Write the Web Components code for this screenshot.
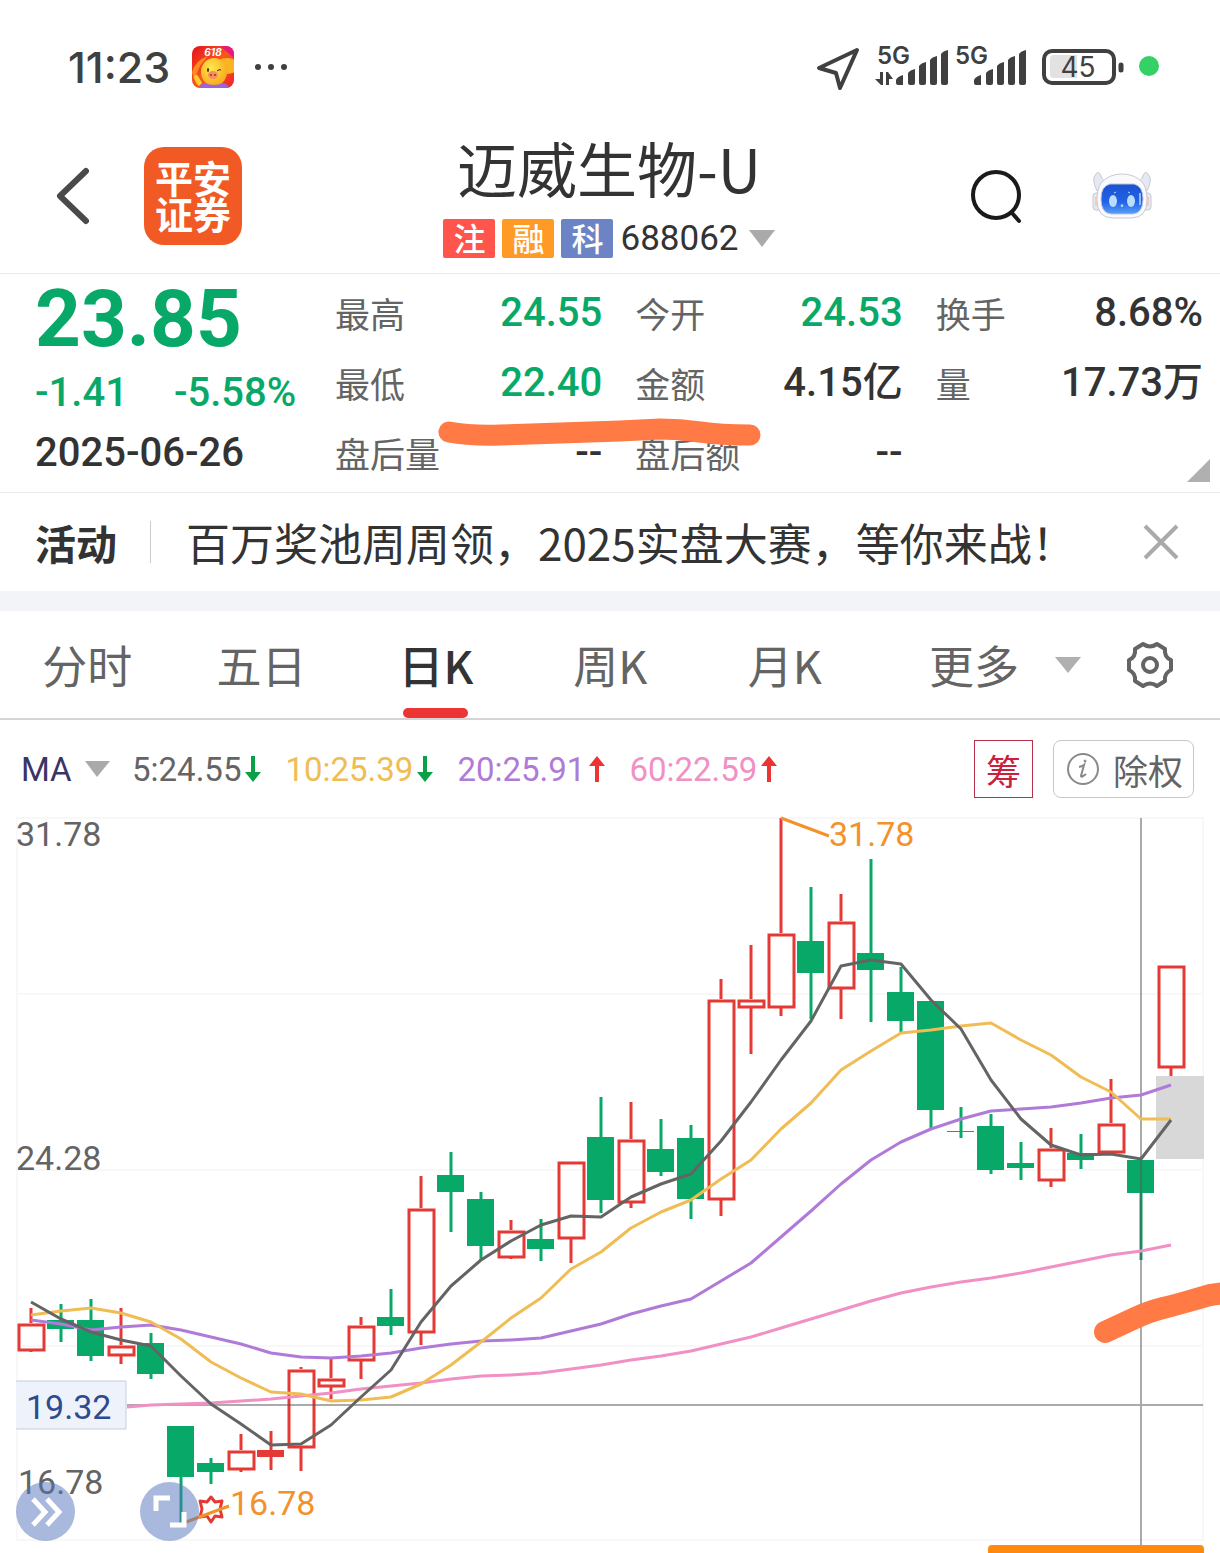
<!DOCTYPE html>
<html lang="zh-CN">
<head>
<meta charset="UTF-8">
<meta name="viewport" content="width=device-width, initial-scale=1">
<title>迈威生物-U 688062</title>
<style>
    body {
        margin: 0;
        background: #fff;
        color: #333;
        font-family: "Noto Sans CJK SC", "Noto Sans", sans-serif;
        --num: Roboto, "Noto Sans CJK SC", sans-serif;
        --up: #e53935;
        --down: #08a968;
        --muted: #646464;
        --line: #ebebeb;
        --brush: #ff7a45;
    }
</style>
</head>
<body>
<stock-page></stock-page>

<script>
class StatusBar extends HTMLElement {
    connectedCallback() {
        this.attachShadow({ mode: 'open' });
        this.shadowRoot.innerHTML = `
            <style>
                :host {
                    display: flex;
                    justify-content: space-between;
                    align-items: center;
                    height: 134px;
                    padding: 0 60px 0 68px;
                    box-sizing: border-box;
                    color: #404040;
                }
                .side {
                    display: flex;
                    align-items: center;
                }
                time {
                    font: 500 43px/1 Inter, sans-serif;
                    margin-right: 22px;
                }
                .dots {
                    margin-left: 20px;
                }
                svg {
                    display: block;
                    flex: none;
                }
                svg text {
                    font-family: Inter, sans-serif;
                    fill: #404040;
                }
            </style>
            <div class="side">
                <time>11:23</time>
                <svg width="42" height="42" viewBox="0 0 42 42">
                    <defs>
                        <linearGradient id="sky" x1="0" y1="0" x2="1" y2="1">
                            <stop offset="0" stop-color="#e60f1e"/>
                            <stop offset=".5" stop-color="#f9581c"/>
                            <stop offset="1" stop-color="#f0222c"/>
                        </linearGradient>
                        <radialGradient id="face" cx=".4" cy=".35" r=".7">
                            <stop offset="0" stop-color="#ffe84a"/>
                            <stop offset="1" stop-color="#f7a51b"/>
                        </radialGradient>
                        <clipPath id="tile"><rect width="42" height="42" rx="8"/></clipPath>
                    </defs>
                    <g clip-path="url(#tile)">
                        <rect width="42" height="42" fill="url(#sky)"/>
                        <path d="M28 0h14v12z" fill="#e6197c"/>
                        <path d="M0 26Q4 14 16 10L8 20 2 34z" fill="#ff8a1f"/>
                        <ellipse cx="35" cy="20" rx="12" ry="8" fill="#fbb325"/>
                        <ellipse cx="22" cy="26" rx="13" ry="14" fill="url(#face)"/>
                        <path d="M8 42q0-5 5-5 9 4 18 0 5 1 6 5z" fill="#9a63e0"/>
                        <path d="M2 31q2-4 4-1l4 7-3 3q-4-3-5-9z" fill="#ffd02e"/>
                        <ellipse cx="21" cy="29" rx="5" ry="4" fill="#f98a63"/>
                        <circle cx="19" cy="29" r="1" fill="#8d3a1c"/>
                        <circle cx="23" cy="29" r="1" fill="#8d3a1c"/>
                        <ellipse cx="16" cy="24" rx="1" ry="2" fill="#4a2a10"/>
                        <path d="M25 25q2-2 4-1" fill="none" stroke="#4a2a10"/>
                        <text x="21" y="10" text-anchor="middle" font-size="10" font-weight="700" font-style="italic" style="fill:#fff">618</text>
                    </g>
                </svg>
                <svg class="dots" width="34" height="8" viewBox="0 0 34 8" fill="#404040">
                    <circle cx="4" cy="4" r="3"/><circle cx="17" cy="4" r="3"/><circle cx="30" cy="4" r="3"/>
                </svg>
            </div>
            <div class="side">
                <svg width="344" height="50" viewBox="816 42 344 50">
                    <defs>
                        <path id="bars" d="M896 80q1-3 7-5v10h-5q-2 0-2-2zM908 73q2-3 7-4v14q0 2-2 2h-3q-2 0-2-2zM919 66q2-3 7-4v21q0 2-2 2h-3q-2 0-2-2zM930 60q2-3 7-4v27q0 2-2 2h-3q-2 0-2-2zM941 54q2-3 7-4v33q0 2-2 2h-3q-2 0-2-2z"/>
                    </defs>
                    <path d="M857 50L819 68l17 5 4 15z" fill="none" stroke="#404040" stroke-width="4" stroke-linejoin="round"/>
                    <text x="877" y="64" font-size="24" font-weight="600">5G</text>
                    <use href="#bars" fill="#404040"/>
                    <path d="M880 72h3v13h-2l-6-6h5zM886 85h3v-6h4l-5-7h-2z" fill="#404040"/>
                    <text x="955" y="64" font-size="24" font-weight="600">5G</text>
                    <use href="#bars" x="78" fill="#404040"/>
                    <rect x="1044" y="51" width="70" height="32" rx="8" fill="none" stroke="#404040" stroke-width="4"/>
                    <path d="M1054 55h23v23h-23q-4 0-4-4V59q0-4 4-4z" fill="#e2e2e2"/>
                    <path d="M1121 65v5" stroke="#404040" stroke-width="5" stroke-linecap="round"/>
                    <text x="1078" y="77" text-anchor="middle" font-size="28">45</text>
                    <circle cx="1149" cy="66" r="10" fill="#34d167"/>
                </svg>
            </div>
        `;
    }
}

class StockHeader extends HTMLElement {
    connectedCallback() {
        this.attachShadow({ mode: 'open' });
        this.shadowRoot.innerHTML = `
            <style>
                :host {
                    display: grid;
                    grid-template-columns: 1fr auto 1fr;
                    align-items: center;
                    padding: 0 68px 15px 54px;
                    border-bottom: 1px solid var(--line);
                }
                button {
                    display: flex;
                    align-items: center;
                    padding: 0;
                    border: 0;
                    background: none;
                    font: inherit;
                    color: inherit;
                }
                .left, .right {
                    display: flex;
                    align-items: center;
                }
                .left {
                    gap: 54px;
                }
                .right {
                    justify-content: flex-end;
                    gap: 69px;
                }
                .logo {
                    width: 98px;
                    height: 98px;
                    box-sizing: border-box;
                    padding-top: 4px;
                    border-radius: 20px;
                    background: #f15a24;
                    color: #fff;
                    font-family: "Liberation Sans", "Noto Sans CJK SC", sans-serif;
                    font-weight: 700;
                    font-size: 38px;
                    line-height: 36px;
                    display: grid;
                    place-content: center;
                    text-align: center;
                }
                .logo span {
                    display: block;
                }
                .title {
                    text-align: center;
                    padding-left: 12px;
                }
                h1 {
                    margin: 0 0 20px;
                    font-weight: 400;
                    font-size: 60px;
                    line-height: 65px;
                }
                .meta {
                    display: flex;
                    justify-content: center;
                    align-items: center;
                    gap: 7px;
                    height: 39px;
                }
                .code {
                    font-family: var(--num);
                    font-size: 35px;
                    line-height: 39px;
                    gap: 10px;
                }
                svg {
                    display: block;
                }
            </style>
            <div class="left">
                <button aria-label="返回">
                    <svg width="36" height="60" viewBox="0 0 36 60" fill="none" stroke="#4a4a4a" stroke-width="6" stroke-linecap="round" stroke-linejoin="round"><path d="M32 5L6 30l26 25"/></svg>
                </button>
                <div class="logo"><span>平安</span><span>证券</span></div>
            </div>
            <div class="title">
                <h1>迈威生物-U</h1>
                <div class="meta">
                    <stock-tag color="#ff554d">注</stock-tag>
                    <stock-tag color="#ff9a27">融</stock-tag>
                    <stock-tag color="#6c84c6">科</stock-tag>
                    <button class="code" aria-haspopup="true">688062
                        <svg width="26" height="17" viewBox="0 0 26 17" fill="#aaa"><path d="M0 0h26L13 17z"/></svg>
                    </button>
                </div>
            </div>
            <div class="right">
                <button aria-label="搜索">
                    <svg width="54" height="56" viewBox="0 0 54 56" fill="none" stroke="#1a1a1a" stroke-width="4" stroke-linecap="round"><circle cx="27" cy="27" r="23"/><path d="M43 45l7 8"/></svg>
                </button>
                <button aria-label="智能助手">
                    <svg width="60" height="50" viewBox="0 0 60 50">
                        <defs>
                            <linearGradient id="glass" x1="0" y1="0" x2="0" y2="1">
                                <stop offset="0" stop-color="#1b52cf"/>
                                <stop offset=".6" stop-color="#2262e8"/>
                                <stop offset="1" stop-color="#58a0f8"/>
                            </linearGradient>
                        </defs>
                        <g fill="#e6e9f1" stroke="#c6cad4">
                            <path d="M5 20Q-1 8 4 3q3-4 5 2 2 6 8 6zM55 20Q61 8 56 3q-3-4-5 2-2 6-8 6z"/>
                            <rect x="1" y="22" width="9" height="17" rx="3"/>
                            <rect x="50" y="22" width="9" height="17" rx="3"/>
                            <path d="M9 12Q17 3 30 3t21 9q4 6 4 17 0 18-16 18H21Q5 47 5 29 5 18 9 12z" fill="#fafafd"/>
                        </g>
                        <path d="M4 26v9M56 26v9" stroke="#f3c9c0" stroke-width="2"/>
                        <path d="M18 13h24q9 2 9 15 0 14-10 15H19Q9 42 9 28q0-13 9-15z" fill="url(#glass)" stroke="#b7c3df"/>
                        <ellipse cx="21" cy="30" rx="4" ry="6" fill="#b9dcff"/>
                        <ellipse cx="39" cy="30" rx="4" ry="6" fill="#b9dcff"/>
                        <path d="M22 22l2-1M38 22l-2-1M29 34h2l-1 2z" fill="#b9dcff" stroke="#b9dcff"/>
                        <path d="M48 22v12" stroke="#8fb9ff" stroke-width="2"/>
                    </svg>
                </button>
            </div>
        `;
    }
}

class StockTag extends HTMLElement {
    connectedCallback() {
        this.attachShadow({ mode: 'open' });
        this.shadowRoot.innerHTML = `
            <style>
                :host {
                    display: block;
                    width: 52px;
                    height: 39px;
                    border-radius: 2px;
                    background: ${this.getAttribute('color')};
                    color: #fff;
                    font-weight: 500;
                    font-size: 32px;
                    line-height: 37px;
                    text-align: center;
                }
            </style>
            <slot></slot>
        `;
    }
}

class QuotePanel extends HTMLElement {
    connectedCallback() {
        const stats = [
            ['最高', '24.55', 'down'], ['今开', '24.53', 'down'], ['换手', '8.68%', ''],
            ['最低', '22.40', 'down'], ['金额', '4.15亿', ''], ['量', '17.73万', ''],
            ['盘后量', '--', ''], ['盘后额', '--', '']
        ];
        this.attachShadow({ mode: 'open' });
        this.shadowRoot.innerHTML = `
            <style>
                :host {
                    display: grid;
                    grid-template-columns: 300px 1fr;
                    position: relative;
                    padding: 4px 17px 4px 35px;
                    border-bottom: 1px solid var(--line);
                    font-family: var(--num);
                    font-weight: 500;
                    font-size: 40px;
                }
                .down {
                    color: var(--down);
                }
                .price {
                    font-size: 80px;
                    font-weight: 700;
                    line-height: 82px;
                }
                .change {
                    display: flex;
                    gap: 46px;
                    line-height: 66px;
                }
                .date {
                    line-height: 54px;
                }
                dl {
                    display: grid;
                    grid-template-columns: repeat(3, 1fr);
                    column-gap: 33px;
                    margin: 0;
                }
                dl div {
                    display: flex;
                    justify-content: space-between;
                    line-height: 70px;
                }
                dt {
                    font-family: "Noto Sans CJK SC", sans-serif;
                    font-weight: 400;
                    font-size: 35px;
                    color: var(--muted);
                }
                dd {
                    margin: 0;
                }
                .more {
                    position: absolute;
                    right: 10px;
                    bottom: 10px;
                    width: 23px;
                    height: 23px;
                    padding: 0;
                    border: 0;
                    background: #b0b0b0;
                    clip-path: polygon(100% 0, 100% 100%, 0 100%);
                }
                .brush {
                    position: absolute;
                    left: 436px;
                    top: 142px;
                }
            </style>
            <div>
                <div class="price down">23.85</div>
                <div class="change down"><span>-1.41</span><span>-5.58%</span></div>
                <div class="date">2025-06-26</div>
            </div>
            <dl>
                ${stats.map(([k, v, c]) => `<div><dt>${k}</dt><dd class="${c}">${v}</dd></div>`).join('')}
            </dl>
            <button class="more" aria-label="展开"></button>
            <svg class="brush" width="330" height="34" viewBox="436 416 330 34" fill="none" stroke="var(--brush)" stroke-width="21" stroke-linecap="round" stroke-linejoin="round">
                <path d="M449 432Q470 436 500 435T560 433L620 431 660 429Q680 429 700 432T750 435"/>
            </svg>
        `;
    }
}

class PromoBar extends HTMLElement {
    connectedCallback() {
        this.attachShadow({ mode: 'open' });
        this.shadowRoot.innerHTML = `
            <style>
                :host {
                    display: flex;
                    align-items: center;
                    height: 98px;
                    padding: 0 40px 0 35px;
                    border-bottom: 20px solid #f3f4f8;
                    font-size: 44px;
                }
                strong {
                    font-size: 41px;
                    padding-right: 33px;
                }
                a {
                    flex: 1;
                    color: inherit;
                    text-decoration: none;
                    white-space: nowrap;
                }
                .rule {
                    width: 1px;
                    height: 42px;
                    margin-right: 35px;
                    background: #ccc;
                }
                button {
                    padding: 0;
                    border: 0;
                    background: none;
                }
                svg {
                    display: block;
                }
            </style>
            <strong>活动</strong>
            <span class="rule"></span>
            <a href="#"><slot></slot></a>
            <button aria-label="关闭">
                <svg width="38" height="36" viewBox="0 0 38 36" stroke="#aaa" stroke-width="4"><path d="M3 2l32 32M35 2L3 34"/></svg>
            </button>
        `;
    }
}

class PeriodTabs extends HTMLElement {
    connectedCallback() {
        const tabs = ['分时', '五日', '日K', '周K', '月K'];
        this.attachShadow({ mode: 'open' });
        this.shadowRoot.innerHTML = `
            <style>
                :host {
                    display: grid;
                    grid-template-columns: repeat(5, 1fr) 348px;
                    height: 107px;
                    border-bottom: 2px solid #d4d4d4;
                }
                button {
                    display: flex;
                    justify-content: center;
                    align-items: center;
                    position: relative;
                    padding: 0;
                    border: 0;
                    background: none;
                    font: inherit;
                    font-size: 45px;
                    color: var(--muted);
                }
                button[aria-selected="true"] {
                    color: #333;
                    font-weight: 500;
                }
                button[aria-selected="true"]::after {
                    content: "";
                    position: absolute;
                    bottom: 0;
                    width: 65px;
                    height: 10px;
                    border-radius: 5px;
                    background: #ec3434;
                }
                .tools {
                    display: flex;
                    justify-content: space-between;
                    padding: 0 46px 0 57px;
                }
                .more {
                    gap: 36px;
                }
            </style>
            ${tabs.map(t => `<button role="tab" aria-selected="${t === '日K'}">${t}</button>`).join('')}
            <div class="tools">
                <button class="more" aria-haspopup="true">更多
                    <svg width="26" height="16" viewBox="0 0 26 16" fill="#b0b0b0"><path d="M0 0h26L13 16z"/></svg>
                </button>
                <button aria-label="设置">
                    <svg width="48" height="48" viewBox="0 0 48 48" fill="none" stroke="#646464" stroke-width="4" stroke-linejoin="round">
                        <path d="M45 29Q38 32 39 40L31 45Q24 40 17 45L9 40Q10 32 3 29V19Q10 16 9 8L17 3Q24 8 31 3L39 8Q38 16 45 19Z"/>
                        <circle cx="24" cy="24" r="7"/>
                    </svg>
                </button>
            </div>
        `;
    }
}

class MaLegend extends HTMLElement {
    connectedCallback() {
        const items = [
            ['5:24.55', '#646464', false], ['10:25.39', '#f0bc54', false],
            ['20:25.91', '#b07ad8', true], ['60:22.59', '#f090c4', true]
        ];
        const arrow = up => up
            ? '<svg width="16" height="26" viewBox="0 0 16 26" fill="#ec3434"><path d="M6 26V10H0L8 0l8 10h-6v16z"/></svg>'
            : '<svg width="16" height="26" viewBox="0 0 16 26" fill="#0ba048"><path d="M6 0v16H0l8 10 8-10h-6V0z"/></svg>';
        this.attachShadow({ mode: 'open' });
        this.shadowRoot.innerHTML = `
            <style>
                :host {
                    display: flex;
                    align-items: center;
                    height: 80px;
                    padding: 18px 26px 0 21px;
                    box-sizing: border-box;
                    font-family: var(--num);
                    font-size: 33px;
                }
                label {
                    display: flex;
                    align-items: center;
                    gap: 12px;
                    margin-right: 22px;
                }
                select {
                    appearance: none;
                    width: 52px;
                    padding: 0;
                    border: 0;
                    background: none;
                    font: inherit;
                    color: #3a3564;
                }
                .item {
                    display: flex;
                    align-items: center;
                    gap: 4px;
                    margin-right: 24px;
                }
                button {
                    display: flex;
                    align-items: center;
                    justify-content: center;
                    height: 58px;
                    box-sizing: border-box;
                    border: 1px solid #c8c8c8;
                    border-radius: 8px;
                    background: #fff;
                    font-family: "Noto Sans CJK SC", sans-serif;
                    font-size: 35px;
                    line-height: 1;
                    color: var(--muted);
                }
                .chip {
                    width: 59px;
                    padding: 0;
                    margin: 0 20px 0 auto;
                    border: 1px solid #b8304a;
                    border-radius: 0;
                    color: #c9203c;
                }
                .adjust {
                    gap: 13px;
                    padding: 0 10px 0 12px;
                }
            </style>
            <label>
                <select aria-label="指标"><option>MA</option></select>
                <svg width="25" height="16" viewBox="0 0 25 16" fill="#aaa"><path d="M0 0h25L12 16z"/></svg>
            </label>
            ${items.map(([t, c, up]) => `<span class="item" style="color:${c}">${t}${arrow(up)}</span>`).join('')}
            <button class="chip">筹</button>
            <button class="adjust">
                <svg width="34" height="34" viewBox="0 0 34 34" fill="none" stroke="#8a8a8a">
                    <circle cx="17" cy="17" r="15" stroke-width="2"/>
                    <path d="M13 15q4-1 5-2l-3 11q0 2 5-2" stroke-width="2"/>
                    <circle cx="19" cy="9" r="1" fill="#8a8a8a"/>
                </svg>
                除权
            </button>
        `;
    }
}

// [high, bodyTop, bodyBottom, low, kind]: u = hollow red, f = filled red, d = green
const CANDLES = [
    [1308, 1323, 1352, 1352, 'u'], [1304, 1320, 1329, 1342, 'd'], [1299, 1320, 1356, 1361, 'd'],
    [1308, 1345, 1357, 1364, 'u'], [1333, 1343, 1374, 1379, 'd'], [1426, 1426, 1477, 1523, 'd'],
    [1458, 1463, 1472, 1484, 'd'], [1434, 1450, 1471, 1472, 'u'], [1431, 1450, 1457, 1470, 'f'],
    [1367, 1369, 1449, 1471, 'u'], [1359, 1378, 1388, 1399, 'u'], [1317, 1325, 1362, 1379, 'u'],
    [1289, 1317, 1326, 1335, 'd'], [1176, 1208, 1334, 1345, 'u'], [1152, 1175, 1192, 1232, 'd'],
    [1192, 1199, 1246, 1260, 'd'], [1220, 1230, 1259, 1259, 'u'], [1219, 1239, 1249, 1261, 'd'],
    [1161, 1161, 1240, 1263, 'u'], [1097, 1137, 1200, 1213, 'd'], [1102, 1139, 1204, 1208, 'u'],
    [1119, 1149, 1172, 1176, 'd'], [1125, 1138, 1199, 1219, 'd'], [979, 999, 1201, 1216, 'u'],
    [945, 999, 1009, 1054, 'u'], [818, 933, 1009, 1016, 'u'], [887, 941, 973, 1019, 'd'],
    [894, 921, 990, 1019, 'u'], [859, 953, 970, 1022, 'd'], [967, 992, 1021, 1034, 'd'],
    [1001, 1001, 1110, 1128, 'd'], [1107, 1131, 1132, 1138, 'd'], [1114, 1126, 1170, 1174, 'd'],
    [1142, 1163, 1168, 1180, 'd'], [1128, 1148, 1182, 1187, 'u'], [1134, 1153, 1160, 1169, 'd'],
    [1079, 1123, 1154, 1154, 'u'], [1160, 1160, 1193, 1260, 'd'], [965, 965, 1069, 1076, 'u']
];

const AVERAGES = [
    ['#f090c4', 4, [1405, 1404, 1403, 1401, 1399, 1396, 1393, 1389, 1386, 1383, 1379, 1376, 1375, 1373, 1369, 1365, 1360, 1356, 1351, 1344, 1337, 1328, 1319, 1310, 1301, 1293, 1287, 1282, 1278, 1273, 1267, 1261, 1255, 1251, 1245]],
    ['#b07ad8', 0, [1320, 1324, 1330, 1327, 1325, 1330, 1337, 1344, 1353, 1357, 1358, 1356, 1353, 1348, 1344, 1341, 1340, 1338, 1331, 1324, 1314, 1306, 1299, 1281, 1263, 1237, 1211, 1184, 1160, 1142, 1129, 1119, 1111, 1109, 1107, 1103, 1098, 1095, 1085]],
    ['#f0bc54', 0, [1315, 1311, 1308, 1313, 1322, 1339, 1362, 1378, 1392, 1394, 1401, 1400, 1397, 1384, 1365, 1342, 1318, 1298, 1269, 1252, 1228, 1212, 1200, 1179, 1160, 1129, 1103, 1070, 1051, 1033, 1030, 1026, 1023, 1040, 1055, 1077, 1092, 1119, 1119]],
    ['#646464', 0, [1302, 1319, 1332, 1340, 1346, 1376, 1404, 1424, 1445, 1444, 1425, 1397, 1370, 1322, 1286, 1260, 1241, 1225, 1216, 1217, 1197, 1184, 1174, 1141, 1102, 1060, 1021, 966, 960, 964, 1000, 1029, 1080, 1119, 1145, 1155, 1154, 1159, 1120]]
];

class CandleChart extends HTMLElement {
    x(i) {
        return 31 + i * 30;
    }

    candle([high, top, bottom, low, kind], i) {
        const x = this.x(i);
        const color = kind === 'd' ? 'var(--down)' : 'var(--up)';
        const wick = `<path d="M${x} ${high}V${top}M${x} ${bottom - 1}V${low}" stroke="${color}" stroke-width="3"/>`;
        if (kind === 'u') {
            return wick + `<rect x="${x - 12}" y="${top + 2}" width="25" height="${bottom - top - 4}" fill="none" stroke="${color}" stroke-width="3"/>`;
        }
        return wick + `<rect x="${x - 14}" y="${top}" width="27" height="${bottom - top}" fill="${color}"/>`;
    }

    average([color, start, values]) {
        const points = values.map((y, i) => `${this.x(i + start)},${y}`).join(' ');
        return `<polyline points="${points}" stroke="${color}"/>`;
    }

    connectedCallback() {
        this.attachShadow({ mode: 'open' });
        this.shadowRoot.innerHTML = `
            <style>
                :host {
                    display: block;
                    position: relative;
                }
                svg {
                    display: block;
                }
                .chart {
                    width: 100%;
                    height: auto;
                }
                text {
                    font-family: var(--num);
                    font-size: 34px;
                    fill: var(--muted);
                }
                .mark {
                    fill: #f3922b;
                }
                button {
                    position: absolute;
                    bottom: 12px;
                    width: 59px;
                    height: 59px;
                    padding: 0;
                    border: 0;
                    border-radius: 50%;
                    background: rgba(81, 115, 187, .5);
                }
                .next {
                    left: 16px;
                }
                .full {
                    left: 140px;
                }
            </style>
            <svg class="chart" viewBox="0 800 1220 753">
                <path d="M17 818H1203V1540H17ZM17 994H1203M17 1170H1203M17 1346H1203" fill="none" stroke="#f8f8f8" stroke-width="2"/>
                <rect x="1156" y="1076" width="48" height="83" fill="#d8d8d8"/>
                <text x="16" y="846">31.78</text>
                <text x="16" y="1170">24.28</text>
                <text x="18" y="1494">16.78</text>
                ${CANDLES.map((c, i) => this.candle(c, i)).join('')}
                <path d="M127 1405H1203M1141 818V1553" stroke="#555" stroke-opacity=".5" stroke-width="2"/>
                <g fill="none" stroke-width="3" stroke-linejoin="round">
                    <path d="M127 1407L151 1405" stroke="#f090c4"/>
                    ${AVERAGES.map(a => this.average(a)).join('')}
                </g>
                <path d="M211 1497l4 5 7-1-2 8 2 8-7-1-4 6-4-6-7 1 2-8-2-8 7 1z" fill="#fff" stroke="var(--up)" stroke-width="3" stroke-linejoin="round"/>
                <path d="M781 818L829 836M186 1522L229 1506" stroke="#f3922b" stroke-width="3"/>
                <text class="mark" x="829" y="846">31.78</text>
                <text class="mark" x="230" y="1515">16.78</text>
                <path d="M16 1381H126V1429H16" fill="#edf2fb" stroke="#c3cde0"/>
                <text x="26" y="1419" style="fill:#2d4b8e">19.32</text>
                <path d="M1105 1332L1133 1319Q1150 1311 1163 1308T1210 1295L1240 1291" fill="none" stroke="var(--brush)" stroke-width="22" stroke-linecap="round"/>
                <path d="M988 1553V1549Q988 1545 992 1545H1200Q1204 1545 1204 1549V1553Z" fill="#ff8a0f"/>
            </svg>
            <button class="next" aria-label="展开指标">
                <svg width="59" height="59" viewBox="0 0 59 59" fill="none" stroke="#fff" stroke-width="5"><path d="M17 17l12 13-12 13M31 17l12 13-12 13"/></svg>
            </button>
            <button class="full" aria-label="全屏">
                <svg width="59" height="59" viewBox="0 0 59 59" fill="none" stroke="#fff" stroke-width="5"><path d="M16 29V16h14M30 43h14V30"/></svg>
            </button>
        `;
    }
}

class StockPage extends HTMLElement {
    connectedCallback() {
        this.attachShadow({ mode: 'open' });
        this.shadowRoot.innerHTML = `
            <style>
                :host {
                    display: block;
                    overflow: hidden;
                }
            </style>
            <status-bar></status-bar>
            <stock-header></stock-header>
            <quote-panel></quote-panel>
            <promo-bar>百万奖池周周领，2025实盘大赛，等你来战！</promo-bar>
            <period-tabs></period-tabs>
            <ma-legend></ma-legend>
            <candle-chart></candle-chart>
        `;
    }
}

customElements.define('status-bar', StatusBar);
customElements.define('stock-tag', StockTag);
customElements.define('stock-header', StockHeader);
customElements.define('quote-panel', QuotePanel);
customElements.define('promo-bar', PromoBar);
customElements.define('period-tabs', PeriodTabs);
customElements.define('ma-legend', MaLegend);
customElements.define('candle-chart', CandleChart);
customElements.define('stock-page', StockPage);
</script>
</body>
</html>
